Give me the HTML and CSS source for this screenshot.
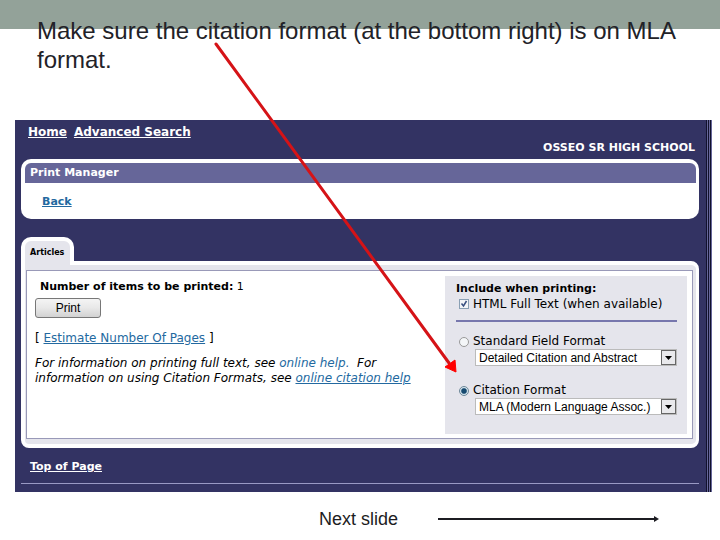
FILE: index.html
```html
<!DOCTYPE html>
<html lang="en">
<head>
  <meta charset="UTF-8">
  <meta name="viewport" content="width=device-width, initial-scale=1.0">
  <title>Citation format</title>
  <link rel="stylesheet" href="styles.css">
</head>
<body>
  <div class="slide">
    <h1 class="slide-title">Make sure the citation format (at the bottom right) is on MLA format.</h1>

    <div class="browser">
      <nav class="top-nav">
        <a href="#">Home</a>
        <a href="#">Advanced Search</a>
      </nav>
      <div class="school">OSSEO SR HIGH SCHOOL</div>

      <div class="manager">
        <h2 class="manager-title">Print Manager</h2>
        <a class="back" href="#">Back</a>
      </div>

      <div class="tab">Articles</div>
      <form class="panel">
        <div class="panel-inner">
          <div class="info">
            <p class="count"><b>Number of items to be printed:</b> 1</p>
            <button type="button" class="print-button">Print</button>
            <p class="estimate">[ <a href="#">Estimate Number Of Pages</a> ]</p>
            <p class="help">For information on printing full text, see <a class="plain" href="#">online help.</a>&nbsp; For<br>information on using Citation Formats, see <a href="#">online citation help</a></p>
          </div>

          <div class="options">
            <h3>Include when printing:</h3>
            <div class="option full-text">
              <input type="checkbox" id="fullText" checked>
              <label for="fullText">HTML Full Text (when available)</label>
            </div>
            <div class="option">
              <input type="radio" name="format" id="standard">
              <label for="standard">Standard Field Format</label>
            </div>
            <div class="select-box">
              <select aria-label="Standard field format">
                <option>Detailed Citation and Abstract</option>
              </select>
              <svg class="drop" width="15" height="15" viewBox="0 0 15 15">
                <rect x="0.5" y="0.5" width="14" height="14" fill="#e9e9ec" stroke="#666"/>
                <path d="M4 6H11L7.5 10Z" fill="#000"/>
              </svg>
            </div>
            <div class="option">
              <input type="radio" name="format" id="citation" checked>
              <label for="citation">Citation Format</label>
            </div>
            <div class="select-box">
              <select aria-label="Citation format">
                <option>MLA (Modern Language Assoc.)</option>
              </select>
              <svg class="drop" width="15" height="15" viewBox="0 0 15 15">
                <rect x="0.5" y="0.5" width="14" height="14" fill="#e9e9ec" stroke="#666"/>
                <path d="M4 6H11L7.5 10Z" fill="#000"/>
              </svg>
            </div>
          </div>
        </div>
      </form>

      <div class="page-end"><a href="#">Top of Page</a></div>
    </div>

    <div class="next">
      <span>Next slide</span>
      <svg width="222" height="8" viewBox="0 0 222 8">
        <path d="M0 4H218" stroke="#1c1c22" stroke-width="2"/>
        <path d="M216 1L221 4L216 7Z" fill="#1c1c22"/>
      </svg>
    </div>

    <svg class="pointer" width="244" height="332" viewBox="0 0 244 332">
      <path d="M2 2L235 321" stroke="#d51317" stroke-width="3" stroke-linecap="round"/>
      <path d="M231 325L241 318L242 330Z" fill="#f00" stroke="#f00"/>
    </svg>
  </div>
</body>
</html>
```

FILE: styles.css
```css
* {
  box-sizing: border-box;
}

body {
  margin: 0;
  background-color: #fff;
  font-family: "DejaVu Sans", Verdana, sans-serif;
  font-size: 12px;
  line-height: 15px;
}

h1, h2, h3, p {
  margin: 0;
}

.slide {
  position: relative;
  min-height: 100vh;
  border-top: 29px solid #93a299;
}

.slide-title {
  margin-top: -13px;
  padding: 0 37px;
  font-family: "Liberation Sans", Arial, sans-serif;
  font-size: 24px;
  font-weight: 400;
  line-height: 29px;
  color: #222228;
}

.browser {
  margin: 46px 8px 0 15px;
  padding: 5px 13px 8px 6px;
  background: repeating-linear-gradient(to right, #11112d 0 1px, #666699 1px 2px) right / 6px 100% no-repeat #333363;
}

.top-nav {
  display: flex;
  gap: 7px;
  padding-left: 7px;
  font-weight: 700;
}

.top-nav a,
.page-end a {
  color: #fff;
}

.school {
  padding: 0 4px 0 0;
  text-align: right;
  font-size: 11px;
  font-weight: 700;
  color: #fff;
}

.manager {
  margin-top: 4px;
  padding: 4px 3px 0 4px;
  height: 60px;
  border-radius: 10px;
  background-color: #fff;
}

.manager-title {
  padding: 2px 5px 3px;
  border-radius: 6px 6px 0 0;
  background-color: #666699;
  color: #fff;
  font-size: 11px;
}

.back {
  display: inline-block;
  margin: 11px 0 0 17px;
  font-size: 11px;
  font-weight: 700;
}

a {
  color: #2369a0;
}

.tab {
  position: relative;
  width: 53px;
  height: 28px;
  margin: 18px 0 -4px;
  padding: 4px 0 0 5px;
  border: 4px solid #fff;
  border-bottom: 0;
  border-radius: 10px 10px 0 0;
  background-color: #e5e5ec;
  font-size: 8px;
  font-weight: 700;
}

.panel {
  padding: 5px 3px 5px 1px;
  border: 4px solid #fff;
  border-right-width: 3px;
  border-radius: 0 8px 8px 8px;
  background-color: #e5e5ec;
}

.panel-inner {
  display: flex;
  justify-content: space-between;
  padding: 5px 5px 4px 8px;
  border: 1px solid #9999b8;
  background-color: #fff;
}

.info {
  padding-top: 3px;
}

.count {
  padding-left: 5px;
  font-size: 11px;
}

.print-button {
  display: block;
  width: 66px;
  height: 20px;
  margin-top: 4px;
  padding: 0;
  border: 1px solid #777;
  border-radius: 3px;
  background: linear-gradient(#f4f4f4, #e8e8e8 50%, #d2d2d2);
  font-family: "Liberation Sans", Arial, sans-serif;
  font-size: 12px;
}

.estimate {
  margin-top: 13px;
}

.help {
  margin-top: 10px;
  font-style: italic;
}

.plain {
  text-decoration: none;
}

.options {
  width: 242px;
  height: 158px;
  padding: 5px 10px 0 11px;
  background-color: #e5e5ec;
}

.options h3 {
  font-size: 11px;
}

.option {
  display: flex;
  align-items: center;
  gap: 4px;
  height: 15px;
  padding-left: 3px;
}

.option input {
  appearance: none;
  width: 10px;
  height: 10px;
  margin: 0;
  border: 1px solid #8aa0b4;
  background-color: #f4f6f8;
}

.option input[type="radio"] {
  border-radius: 50%;
  border-color: #999;
}

.option input[type="radio"]:checked {
  border-color: #6c8798;
  background: radial-gradient(circle, #164a70 40%, #d5e4ed 60%);
}

.option input[type="checkbox"]:checked {
  background-image: url("data:image/svg+xml,%3Csvg xmlns='http://www.w3.org/2000/svg' viewBox='0 0 8 8'%3E%3Cpath d='M1.5 3.5L3.5 6L6.5 1' fill='none' stroke='%23384f80' stroke-width='1.5'/%3E%3C/svg%3E");
}

.full-text {
  height: 26px;
  padding-bottom: 8px;
  margin-bottom: 12px;
  border-bottom: 2px solid #7777ad;
}

.select-box {
  position: relative;
  height: 17px;
  margin: 0 0 17px 19px;
}

.select-box select {
  appearance: none;
  display: block;
  width: 100%;
  height: 17px;
  padding: 0 17px 0 3px;
  border: 1px solid #bbb;
  border-radius: 0;
  background-color: #fff;
  color: #000;
  font-family: "Liberation Sans", Arial, sans-serif;
  font-size: 12px;
}

.drop {
  position: absolute;
  top: 1px;
  right: 1px;
  pointer-events: none;
}

.page-end {
  padding: 11px 0 9px 9px;
  border-bottom: 1px solid #9999c4;
  font-size: 11px;
  font-weight: 700;
}

.next {
  display: flex;
  align-items: center;
  gap: 40px;
  padding: 17px 0 0 319px;
  font-family: "Liberation Sans", Arial, sans-serif;
  font-size: 18px;
  line-height: 20px;
  color: #1c1c22;
}

.pointer {
  position: absolute;
  top: 13px;
  left: 214px;
  pointer-events: none;
}
```
